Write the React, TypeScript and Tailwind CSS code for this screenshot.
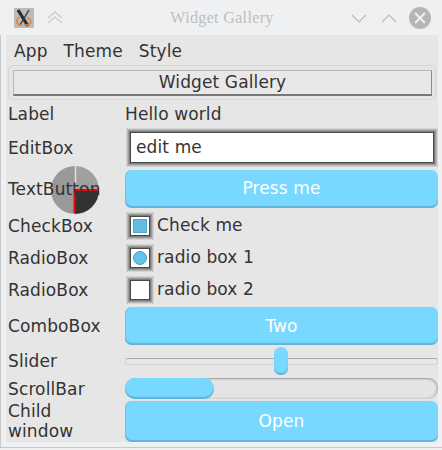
import React from 'react';

const FONT = "font-['DejaVu_Sans',sans-serif]";

const Row = ({ label, h, children }: { label: React.ReactNode; h: string; children: React.ReactNode }) => (
  <div className={`flex items-center ${h}`}>
    <div className="relative z-10 w-[119px] shrink-0 pl-[2px] text-[17px] tracking-[0.12px] leading-[20px] text-[#333]">{label}</div>
    <div className="flex-1 min-w-0 flex items-center">{children}</div>
  </div>
);

const BlueButton = ({ text, h }: { text: string; h: string }) => (
  <div className={`${h} w-full flex items-center justify-center rounded-[7px] bg-[#79d8ff] shadow-[inset_0_-2px_1px_#62b4d6,inset_1px_0_1px_#6cc4e8] text-white text-[17px] tracking-[0.12px] pt-[1px]`}>
    {text}
  </div>
);

const Well = ({ children }: { children?: React.ReactNode }) => (
  <div className="ml-[6px] w-[18px] h-[18px] flex items-center justify-center bg-white shadow-[0_0_0_1px_#4a4a4a,0_0_0_2px_#7c7c7c,0_0_0_3px_#9c9c9c,0_0_0_4px_#b8b8b8,0_0_0_5px_#d4d4d4]">
    {children}
  </div>
);

const TitleIcon = () => (
  <svg width="20" height="20" viewBox="0 0 20 20">
    <rect width="20" height="20" rx="1" fill="#b9bbbd" />
    <path d="M4 2 L14 18" stroke="#2c2c2c" strokeWidth="3.2" />
    <path d="M15 2 L6 17" stroke="#3a3a3a" strokeWidth="1.4" />
    <path d="M5 9 C1 13 3 18 8 17 M13 10 C18 11 18 16 13 17 L10 17" stroke="#e0843a" strokeWidth="1.6" fill="none" />
  </svg>
);

const Gauge = () => (
  <svg width="48" height="48" viewBox="0 0 48 48" className="absolute left-[51px] top-[166px] z-[5]">
    <path d="M24 24 L24 0 A24 24 0 0 0 24 48 Z" fill="#999" />
    <path d="M24 24 L24 0 A24 24 0 0 1 48 24 Z" fill="#a0a0a0" />
    <path d="M24 24 L48 24 A24 24 0 0 1 24 48 Z" fill="#333" />
    <path d="M24.5 0 L24.5 23" stroke="#e0e0e0" strokeWidth="1.5" />
    <path d="M47 24 L23.5 24 L23.5 47" stroke="#f00" strokeWidth="2" fill="none" />
  </svg>
);

export default function App() {
  return (
    <div className={`${FONT} relative w-[442px] h-[450px] bg-[#eff0f1] overflow-hidden`}>
      <div className="flex items-center h-[35px] pl-[14px] pr-[11px]">
        <TitleIcon />
        <svg width="16" height="16" viewBox="0 0 16 16" className="ml-[13px]" fill="none" stroke="#c8cacc" strokeWidth="1.3">
          <path d="M1 8 L8 2 L15 8 M1 13 L8 7 L15 13" />
        </svg>
        <div className="flex-1 pl-[30px] text-center font-['Liberation_Serif',serif] text-[16px] tracking-[0.35px] text-[#bcbebf]">Widget Gallery</div>
        <svg width="16" height="12" viewBox="0 0 16 12" fill="none" stroke="#b9bbbd" strokeWidth="1.2">
          <path d="M1 3 L8 10 L15 3" />
        </svg>
        <svg width="16" height="12" viewBox="0 0 16 12" fill="none" stroke="#b9bbbd" strokeWidth="1.2" className="ml-[14px]">
          <path d="M1 10 L8 3 L15 10" />
        </svg>
        <svg width="22" height="22" viewBox="0 0 22 22" className="ml-[12px]">
          <circle cx="11" cy="11" r="11" fill="#b3b5b7" />
          <path d="M6 6 L16 16 M16 6 L6 16" stroke="#eff0f1" strokeWidth="2" />
        </svg>
      </div>

      <div className="mx-[6px] w-[432px] h-[407px] bg-[#e6e6e6] text-[#333]">
        <div className="flex h-[30px] items-center pt-[4px] pl-[8px] gap-[16px] text-[17px] tracking-[0.12px]">
          <span>App</span>
          <span>Theme</span>
          <span>Style</span>
        </div>
        <div className="h-[35px] mx-[2px] flex items-center pl-[4px] pr-[3px] rounded-[5px] border border-[#d6d6d6]">
          <div className="w-full h-[26px] flex items-center justify-center pt-[2px] bg-[#e8e8e8] border border-[#b8b8b8] border-r-[#8c8c8c] border-b-2 border-b-[#777] text-[17px] tracking-[0.12px]">
            Widget Gallery
          </div>
        </div>
        <Row label="Label" h="h-[28px]">
          <span className="pt-[1px] text-[17px] tracking-[0.12px]">Hello world</span>
        </Row>
        <Row label="EditBox" h="h-[39px]">
          <div className="ml-[6px] w-[302px] h-[29px] bg-white flex items-center pl-[5px] text-[17px] tracking-[0.12px] shadow-[0_0_0_1px_#4a4a4a,0_0_0_2px_#7c7c7c,0_0_0_3px_#9c9c9c,0_0_0_4px_#b8b8b8,0_0_0_5px_#d4d4d4]">
            edit me
          </div>
        </Row>
        <Row label="TextButton" h="h-[43px]">
          <BlueButton text="Press me" h="h-[38px]" />
        </Row>
        <Row label="CheckBox" h="h-[31px]">
          <Well>
            <div className="w-[14px] h-[14px] bg-[#62bce0] border border-[#55a6c8]" />
          </Well>
          <span className="ml-[8px] text-[17px] tracking-[0.12px]">Check me</span>
        </Row>
        <Row label="RadioBox" h="h-[33px]">
          <Well>
            <div className="w-[14px] h-[14px] rounded-full bg-[#66c4ec] border border-[#4f98b8]" />
          </Well>
          <span className="ml-[8px] text-[17px] tracking-[0.12px]">radio box 1</span>
        </Row>
        <Row label="RadioBox" h="h-[32px]">
          <Well />
          <span className="ml-[8px] text-[17px] tracking-[0.12px]">radio box 2</span>
        </Row>
        <Row label="ComboBox" h="h-[40px]">
          <BlueButton text="Two" h="h-[38px]" />
        </Row>
        <Row label="Slider" h="h-[30px]">
          <div className="relative w-full h-[28px] flex items-center">
            <div className="w-full h-[7px] rounded-[3px] bg-[#e8e8e8] border border-[#d0d0d0] border-t-[#aaa]" />
            <div className="absolute left-[149px] top-0 w-[14px] h-[28px] rounded-[7px] bg-[#79d8ff] shadow-[inset_0_-2px_1px_#62b4d6]" />
          </div>
        </Row>
        <Row label="ScrollBar" h="h-[25px]">
          <div className="relative w-full h-[21px] rounded-[10px] bg-[#e4e4e4] shadow-[inset_0_1px_2px_#999,inset_-2px_-1px_2px_#ccc]">
            <div className="w-[89px] h-[21px] rounded-[10px] bg-[#79d8ff] shadow-[inset_0_-2px_1px_#62b4d6]" />
          </div>
        </Row>
        <Row label={<div className="-mt-[2px]">Child<br />window</div>} h="h-[41px]">
          <BlueButton text="Open" h="h-[41px]" />
        </Row>
      </div>
      <div className="absolute left-0 top-[35px] w-px h-[412px] bg-[#c6c8ca]" />
      <div className="absolute left-0 top-[447px] w-[442px] h-px bg-[#c6c8ca]" />
      <Gauge />
    </div>
  );
}
